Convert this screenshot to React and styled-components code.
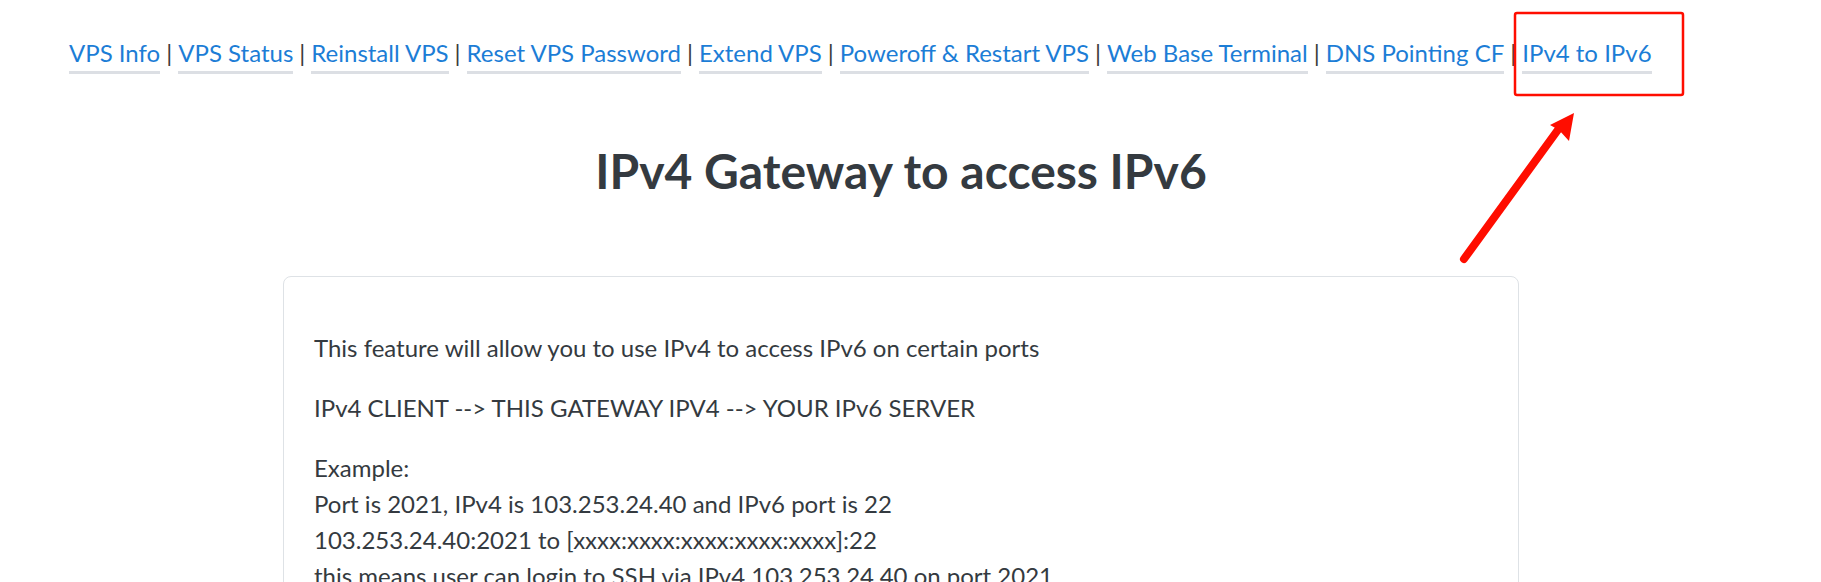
import React from 'react';
import styled, { createGlobalStyle } from 'styled-components';

const GlobalStyle = createGlobalStyle`
  html, body {
    margin: 0;
    padding: 0;
    background: #fff;
  }
  body {
    font-family: Lato, "Open Sans", sans-serif;
    color: #343a40;
  }
`;

const Page = styled.div`
  position: relative;
  min-height: 582px;
`;

const Nav = styled.nav`
  display: flex;
  align-items: flex-start;
  padding: 36px 0 0 69px;
  font-size: 24px;
  line-height: 34.8px;
`;

const NavLink = styled.a`
  display: inline-block;
  color: #1c7dd6;
  text-decoration: none;
  border-bottom: 3px solid #dcdfe4;
  white-space: nowrap;
`;

const Sep = styled.span`
  color: #3a3a3a;
  margin: 0 6px;
`;

const Main = styled.main`
  width: 1236px;
  margin-left: 283px;
`;

const Title = styled.h2`
  margin: 68px 0 0;
  text-align: center;
  font-size: 48px;
  font-weight: 700;
  line-height: 1.2;
  color: #343a40;
`;

const Card = styled.section`
  margin-top: 77px;
  border: 1px solid #dee2e6;
  border-radius: 8px;
  padding: 53px 30px 60px;
`;

const Para = styled.p`
  margin: 0 0 24px;
  font-size: 24px;
  line-height: 36px;
  color: #343a40;
`;

const Overlay = styled.svg`
  position: absolute;
  left: 0;
  top: 0;
  pointer-events: none;
`;

const links = [
  'VPS Info',
  'VPS Status',
  'Reinstall VPS',
  'Reset VPS Password',
  'Extend VPS',
  'Poweroff & Restart VPS',
  'Web Base Terminal',
  'DNS Pointing CF',
  'IPv4 to IPv6',
];

export default function App() {
  return (
    <Page>
      <GlobalStyle />
      <Nav>
        {links.map((l, i) => (
          <React.Fragment key={l}>
            {i > 0 && <Sep>|</Sep>}
            <NavLink href="#">{l}</NavLink>
          </React.Fragment>
        ))}
      </Nav>
      <Main>
        <Title>IPv4 Gateway to access IPv6</Title>
        <Card>
          <Para>This feature will allow you to use IPv4 to access IPv6 on certain ports</Para>
          <Para>IPv4 CLIENT --&gt; THIS GATEWAY IPV4 --&gt; YOUR IPv6 SERVER</Para>
          <Para>
            Example:
            <br />
            Port is 2021, IPv4 is 103.253.24.40 and IPv6 port is 22
            <br />
            103.253.24.40:2021 to [xxxx:xxxx:xxxx:xxxx:xxxx]:22
            <br />
            this means user can login to SSH via IPv4 103.253.24.40 on port 2021
          </Para>
        </Card>
      </Main>
      {/* annotation: red box + arrow */}
      <Overlay width="1821" height="582" viewBox="0 0 1821 582">
        <rect x="1515" y="13" width="168" height="82" rx="2" fill="none" stroke="#ff0d00" strokeWidth="2.5" />
        <line x1="1464" y1="259" x2="1560" y2="127" stroke="#ff0d00" strokeWidth="8" strokeLinecap="round" />
        <path d="M1574 113 L1550 125 L1559 130 L1569 141 Z" fill="#ff0d00" />
      </Overlay>
    </Page>
  );
}
